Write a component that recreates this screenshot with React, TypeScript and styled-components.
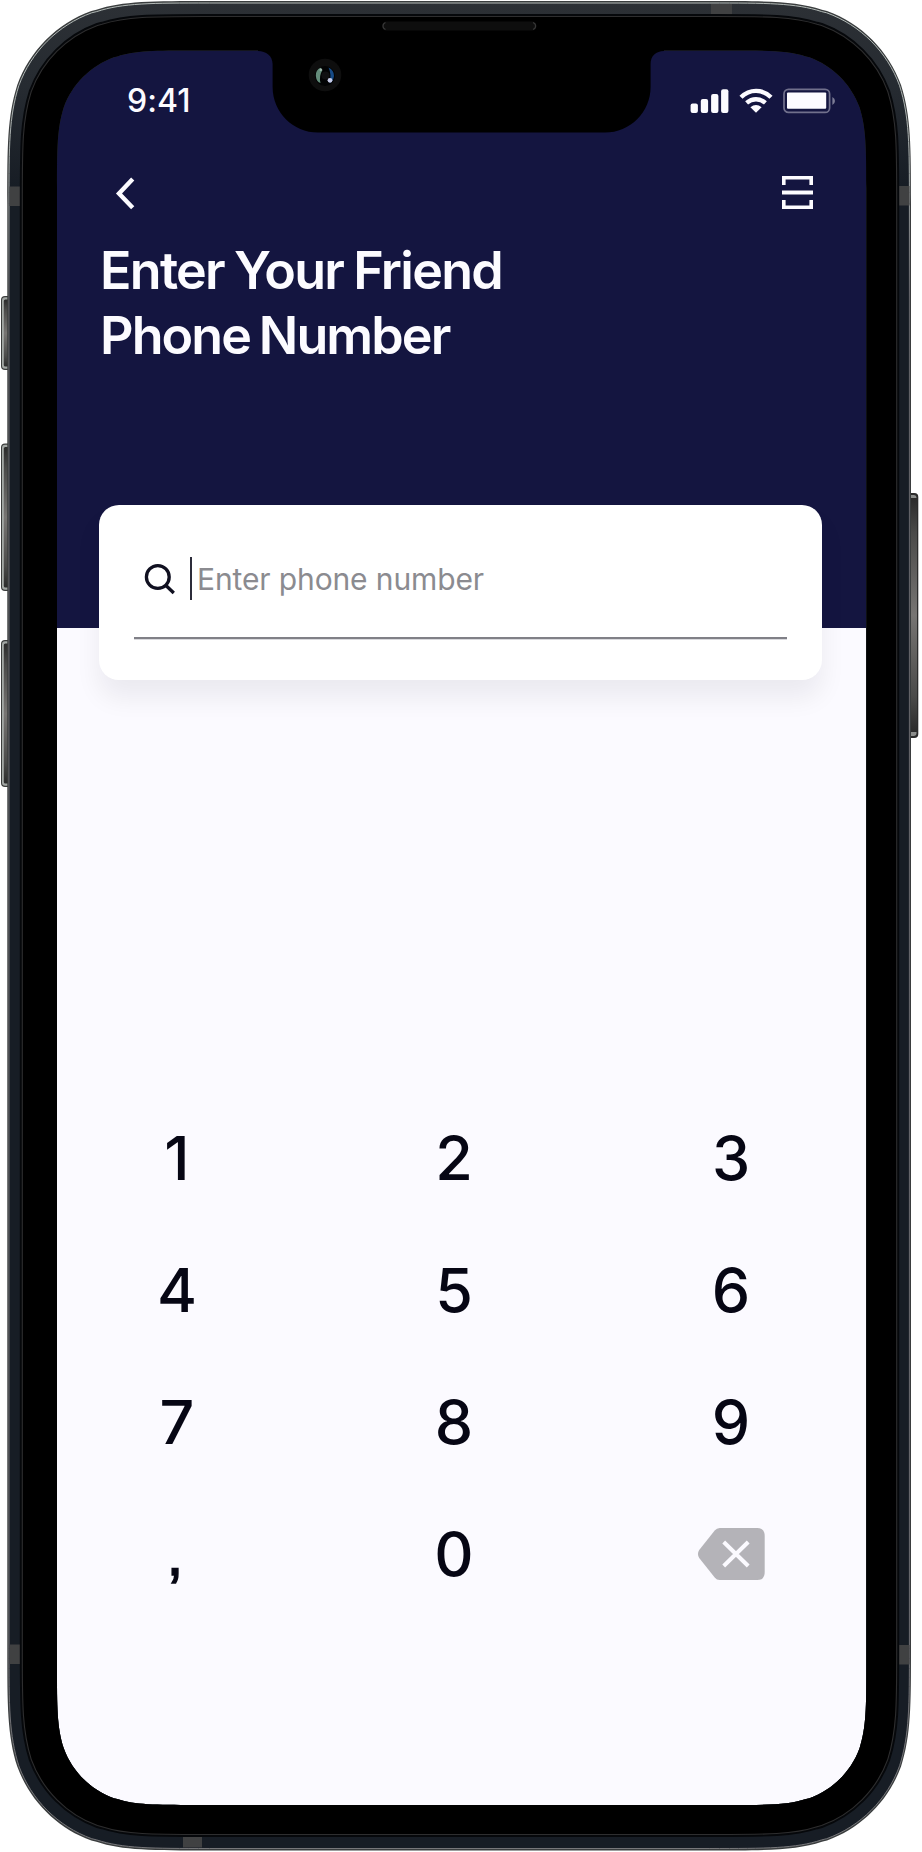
import React from "react";
import styled, { createGlobalStyle } from "styled-components";

const GlobalStyle = createGlobalStyle`
  *, *::before, *::after { box-sizing: border-box; }
  body { margin: 0; background: #fff; font-family: Inter, "Liberation Sans", sans-serif; }
  button { border: 0; padding: 0; background: none; font: inherit; color: inherit; }
`;

const Phone = styled.div`
  position: relative;
  width: 922px;
  height: 1852px;
  padding: 50px 56px 46px 57px;
  overflow: hidden;
`;

const Screen = styled.main`
  display: flex;
  flex-direction: column;
  height: 100%;
  background: #fbfaff;
`;

const Header = styled.header`
  height: 578px;
  flex: none;
  background: #141540;
  color: #fcfbff;
`;

const StatusBar = styled.div`
  display: flex;
  justify-content: space-between;
  align-items: center;
  height: 101px;
  padding: 0 30px 0 70px;
`;

const Clock = styled.time`
  font-size: 32px;
  font-weight: 500;
  line-height: 40px;
  letter-spacing: 0.1px;
`;

const StatusIcons = styled.div`
  display: flex;
  align-items: center;
  gap: 10px;
`;

const Toolbar = styled.nav`
  display: flex;
  justify-content: space-between;
  align-items: center;
  height: 83px;
  padding: 0 53px 0 55px;
`;

const IconButton = styled.button`
  display: flex;
`;

const Title = styled.h1`
  margin: 4px 0 0 43px;
  font-size: 52px;
  font-weight: 600;
  line-height: 65px;
`;

const TitleLine = styled.span<{ $tracking: number; $gap: number }>`
  display: block;
  letter-spacing: ${(p) => p.$tracking}px;
  word-spacing: ${(p) => p.$gap}px;
`;

const SearchCard = styled.section`
  flex: none;
  height: 175px;
  margin: -123px 44px 0 42px;
  padding: 37px 35px 0;
  border-radius: 20px;
  background: #fff;
  box-shadow: 0 18px 26px rgba(20, 20, 30, 0.065);
`;

const SearchField = styled.label`
  display: flex;
  align-items: center;
  height: 97px;
  padding: 2px 0 24px 9px;
  border-bottom: 2px solid #808087;
  box-shadow: 0 1px #d9d9dd;
`;

const Caret = styled.span`
  width: 2px;
  height: 43px;
  margin-left: 15px;
  background: #2c2c3a;
`;

const Placeholder = styled.span`
  margin-left: 5px;
  color: #8b8b90;
  font-size: 30px;
  line-height: 40px;
  letter-spacing: -0.12px;
`;

const Keypad = styled.div`
  display: grid;
  grid-template-columns: repeat(3, 70px);
  grid-auto-rows: 132px;
  justify-content: space-between;
  margin: 412px 100px 0 85px;
`;

const Key = styled.button<{ $comma?: boolean }>`
  display: flex;
  align-items: center;
  justify-content: center;
  padding-right: ${(p) => (p.$comma ? 4 : 0)}px;
  color: #060614;
  font-family: ${(p) => (p.$comma ? '"Liberation Sans", Arial, sans-serif' : "inherit")};
  font-size: 61px;
  font-weight: ${(p) => (p.$comma ? 400 : 450)};
  line-height: 1;
  -webkit-text-stroke: ${(p) => (p.$comma ? "1.4px #060614" : "0")};
`;

const Bezel = styled.svg`
  position: absolute;
  inset: 0;
  pointer-events: none;
`;

/** Rounded rectangle whose corners ease continuously into the straight sides. */
function smoothRect(x0: number, y0: number, x1: number, y1: number, r: number) {
  const corner = (cx: number, cy: number, sx: number, sy: number, reverse: boolean) => {
    const pts = [
      [1.52866, 0], [1.08849, 0], [0.86841, 0], [0.66993, 0.0655],
      [0.63149, 0.07491], [0.37282, 0.16906], [0.16906, 0.37282], [0.07491, 0.63149],
      [0, 0.86841], [0, 1.08849], [0, 1.52866],
    ].map(([a, b]) => `${(cx + sx * a * r).toFixed(2)} ${(cy + sy * b * r).toFixed(2)}`);
    if (reverse) {
      const q = pts.slice().reverse();
      return `L${q[0]}C${q[1]} ${q[2]} ${q[3]}C${q[4]} ${q[5]} ${q[6]}L${q[7]}C${q[8]} ${q[9]} ${q[10]}`;
    }
    return `L${pts[0]}C${pts[1]} ${pts[2]} ${pts[3]}L${pts[4]}C${pts[5]} ${pts[6]} ${pts[7]}C${pts[8]} ${pts[9]} ${pts[10]}`;
  };
  const body =
    corner(x1, y0, -1, 1, false) +
    corner(x1, y1, -1, -1, true) +
    corner(x0, y1, 1, -1, false) +
    corner(x0, y0, 1, 1, true);
  return "M" + body.slice(1) + "Z";
}

const outer = smoothRect(7.3, 1, 911, 1850.5, 133);
const rim = smoothRect(9, 3, 909.4, 1848.5, 131);
const glass = smoothRect(22.3, 16.5, 896.7, 1834.5, 119);
const display = smoothRect(57, 50.5, 866.3, 1805, 90);
const notch =
  "M258 49H664V51C656 51 650.6 56 650.6 64V87C650.6 112 630 132.6 605 132.6H318C293 132.6 272.6 112 272.6 87V64C272.6 56 266 51 258 51Z";

function DeviceFrame() {
  return (
    <Bezel width="922" height="1852" viewBox="0 0 922 1852" aria-hidden="true">
      <defs>
        <linearGradient id="band" x1="0" y1="0" x2="0" y2="1">
          <stop offset="0" stopColor="#2c3035" />
          <stop offset="0.045" stopColor="#262b31" />
          <stop offset="0.1" stopColor="#171d25" />
          <stop offset="1" stopColor="#171d25" />
        </linearGradient>
        <linearGradient id="edge" x1="0" y1="0" x2="0" y2="1">
          <stop offset="0" stopColor="#b3bab7" />
          <stop offset="0.09" stopColor="#a5abaa" />
          <stop offset="0.16" stopColor="#66666b" />
          <stop offset="0.88" stopColor="#6d6d72" />
          <stop offset="1" stopColor="#77777a" />
        </linearGradient>
        <linearGradient id="key" x1="0" y1="0" x2="0" y2="1">
          <stop offset="0" stopColor="#2b2b2b" />
          <stop offset="0.15" stopColor="#4a4a49" />
          <stop offset="0.5" stopColor="#777573" />
          <stop offset="0.85" stopColor="#4a4a49" />
          <stop offset="1" stopColor="#2b2b2b" />
        </linearGradient>
      </defs>

      {[[296, 74], [443.5, 147.5], [640, 147]].map(([y, h]) => (
        <g key={y}>
          <rect x="1" y={y} width="12" height={h} rx="4" fill="#3b3d3c" />
          <rect x="2" y={y + 1.2} width="11" height={h - 2.4} rx="3" fill="#a3a8a5" />
          <rect x="3.8" y={y + 3.5} width="10" height={h - 7} rx="1.5" fill="url(#key)" />
        </g>
      ))}
      <rect x="905" y="493" width="13.3" height="245" rx="4" fill="#2b2b2b" />
      <rect x="905" y="495" width="11.5" height="241" rx="3" fill="#8c8e8c" />
      <rect x="905" y="498" width="12" height="234" fill="url(#key)" />

      <path fillRule="evenodd" fill="#3a3d3e" d={outer + display} />
      <path fillRule="evenodd" fill="url(#band)" d={rim + display} />
      <path fill="none" stroke="url(#edge)" strokeWidth="1" d={rim} />
      <g fill="#404142">
        <rect x="711" y="4" width="21" height="12" />
        <rect x="9.5" y="186.5" width="12" height="19.5" />
        <rect x="898" y="186" width="11.5" height="19.5" />
        <rect x="9.5" y="1644.5" width="12" height="19.5" />
        <rect x="898" y="1645" width="11.5" height="19.5" />
        <rect x="183" y="1836" width="19" height="11.5" />
      </g>
      <path fill="none" stroke="#06080b" strokeWidth="5" d={glass} />
      <path fillRule="evenodd" fill="#000" d={glass + display} />
      <path fill="none" stroke="#2e2e2f" strokeWidth="1.1" d={glass} />

      <path fill="#000" d={notch} />
      <rect x="382" y="21.5" width="154.5" height="9" rx="4.5" fill="#0e0e0e" />
      <path d="M385.5 22.5Q383 23.5 383 26T385.5 29.5M533 22.5Q535.6 23.5 535.6 26T533 29.5" fill="none" stroke="#363636" strokeWidth="1.2" />
      <circle cx="325" cy="75" r="16.3" fill="#0e0e0e" />
      <circle cx="325" cy="76" r="10" fill="#020304" />
      <path d="M320.5 67.8Q315.5 70 315.8 76Q316.5 82 320.5 83Q318.7 76 322.5 70Z" fill="#648d7b" />
      <path d="M328.5 67.5Q334 70 334 76Q333 82 329.5 83Q332 75 328.5 67.5Z" fill="#164a85" />
      <circle cx="325.5" cy="75.5" r="4" fill="#101012" />
      <circle cx="330" cy="80.3" r="2.4" fill="#c8cce8" />
      <circle cx="320.8" cy="69.8" r="1.3" fill="#a3b8ae" />
    </Bezel>
  );
}

const SignalIcon = () => (
  <svg width="39" height="26" viewBox="0 0 39 26" fill="currentColor">
    <rect x="0.6" y="15.6" width="7.3" height="9.4" rx="2" />
    <rect x="10.8" y="11" width="7.3" height="14" rx="2" />
    <rect x="21.1" y="6" width="7.3" height="19" rx="2" />
    <rect x="31.1" y="1.2" width="7.3" height="23.8" rx="2" />
  </svg>
);

const WifiIcon = () => (
  <svg width="34" height="26" viewBox="0 0 34 26">
    <g fill="none" stroke="currentColor" strokeWidth="4.4">
      <path d="M2 9.3Q8.5 2.9 17 2.9T32 9.3" />
      <path d="M7.6 14.9Q11.8 11.2 17 11.2T26.4 14.9" />
    </g>
    <path d="M11.4 19.2Q17 14.6 22.6 19.2L17 24.8Z" fill="currentColor" />
  </svg>
);

const BatteryIcon = () => (
  <svg width="53" height="26" viewBox="0 0 53 26">
    <rect x="1" y="1.4" width="45.6" height="23" rx="4.5" fill="none" stroke="currentColor" strokeOpacity="0.4" strokeWidth="1.7" />
    <rect x="4" y="4.6" width="39.2" height="16.2" rx="1" fill="currentColor" />
    <path d="M49.4 9Q52 10.4 52 13T49.4 17Z" fill="currentColor" opacity="0.45" />
  </svg>
);

const BackIcon = () => (
  <svg width="28" height="34" viewBox="0 0 28 34" fill="none" stroke="currentColor" strokeWidth="4.4">
    <path d="M20.7 3L7 17.4L20.7 31.8" />
  </svg>
);

const ScanIcon = () => (
  <svg width="31" height="33" viewBox="0 0 31 33" fill="none" stroke="currentColor" strokeWidth="3.6">
    <path d="M1.8 9V1.8H29.2V9M1.8 24V31.2H29.2V24" />
    <path d="M0 16.5H31" strokeWidth="4" />
  </svg>
);

const SearchIcon = () => (
  <svg width="32" height="32" viewBox="-0.5 0 32 32" fill="none" stroke="#101020" strokeWidth="3.3">
    <circle cx="14.3" cy="14" r="11.4" />
    <path d="M22.2 22.2L30.3 30" />
  </svg>
);

const BackspaceIcon = () => (
  <svg width="68" height="52" viewBox="-0.7 0 68 52">
    <path d="M22 0H59.5Q67 0 67 8V44Q67 52 59.5 52H22Q19 52 17 49.5L1.5 30Q-1 26 1.5 22L17 2.5Q19 0 22 0Z" fill="#b4b3b8" />
    <path d="M26 14L50.5 38M50.5 14L26 38" stroke="#fbfaff" strokeWidth="4" fill="none" />
  </svg>
);

const digits = ["1", "2", "3", "4", "5", "6", "7", "8", "9"];

export default function App() {
  return (
    <Phone>
      <GlobalStyle />
      <Screen>
        <Header>
          <StatusBar>
            <Clock>9:41</Clock>
            <StatusIcons>
              <SignalIcon />
              <WifiIcon />
              <BatteryIcon />
            </StatusIcons>
          </StatusBar>
          <Toolbar>
            <IconButton aria-label="Back"><BackIcon /></IconButton>
            <IconButton aria-label="Scan"><ScanIcon /></IconButton>
          </Toolbar>
          <Title as="h1" style={undefined}>
            <TitleLine $tracking={-1.7} $gap={-1.5}>Enter Your Friend</TitleLine>
            <TitleLine $tracking={-1.9} $gap={-2.5}>Phone Number</TitleLine>
          </Title>
        </Header>
        <SearchCard>
          <SearchField>
            <SearchIcon />
            <Caret />
            <Placeholder>Enter phone number</Placeholder>
          </SearchField>
        </SearchCard>
        <Keypad>
          {digits.map((d) => <Key key={d}>{d}</Key>)}
          <Key $comma>,</Key>
          <Key>0</Key>
          <Key aria-label="Delete"><BackspaceIcon /></Key>
        </Keypad>
      </Screen>
      <DeviceFrame />
    </Phone>
  );
}
